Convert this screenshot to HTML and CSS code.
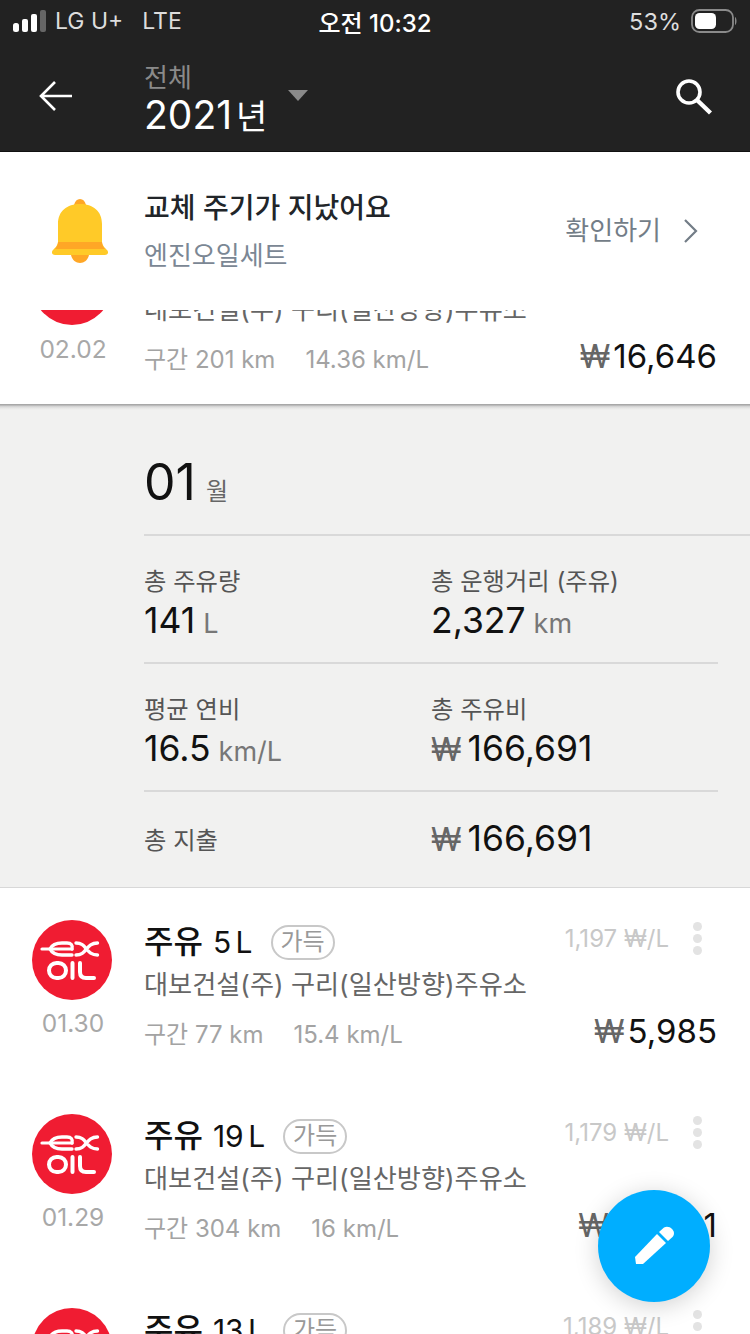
FILE: index.html
```html
<!DOCTYPE html>
<html lang="ko">
<head>
  <meta charset="UTF-8">
  <meta name="viewport" content="width=device-width, initial-scale=1.0">
  <title>주유 기록</title>
  <link rel="stylesheet" href="styles.css">
</head>
<body>
  <svg class="defs" width="0" height="0">
    <symbol id="ex-oil" viewBox="0 0 80 80">
      <circle cx="40" cy="40" r="40" fill="#f01c32"/>
      <g fill="none" stroke="#fff" stroke-linecap="round">
        <path stroke-width="3.2" d="M10 29H40"/>
        <path stroke-width="3.4" d="M18 29c2-4 6-6 12-6h5c4 0 6 2 5 6M18 29c2 4 6 6 12 6h10"/>
        <path stroke-width="3.4" d="M44 23c6 0 8 3 10.500 6s5 6 11 6M65.500 23c-6 0-8.500 3-11 6s-4.500 6-10.500 6"/>
        <rect x="17" y="43" width="17" height="15" rx="7.500" stroke-width="4"/>
        <path stroke-width="4" d="M40.500 43v15M48 43v9c0 4 2 6 6 6h8"/>
      </g>
    </symbol>
  </svg>

  <header class="top">
    <div class="status">
      <div class="status-left">
        <svg width="34" height="22" viewBox="0 0 34 22">
          <rect x="0" y="13" width="6" height="9" rx="2.500" fill="#fff"/>
          <rect x="9" y="9" width="6" height="13" rx="2" fill="#fff"/>
          <rect x="18" y="4" width="6" height="18" rx="2" fill="#fff"/>
          <rect x="27" y="0" width="6" height="22" rx="2" fill="#666"/>
        </svg>
        <span class="carrier">LG U+</span>
        <span class="carrier">LTE</span>
      </div>
      <div class="clock">오전 10:32</div>
      <div class="status-right">
        <span>53%</span>
        <svg width="46" height="24" viewBox="0 0 46 24">
          <rect x="1" y="1" width="41" height="22" rx="7.500" fill="none" stroke="#8a8a8a" stroke-width="1.800"/>
          <rect x="4" y="4" width="21" height="16" rx="4.500" fill="#fff"/>
          <path d="M44 8c2 1 2 7 0 8z" fill="#8a8a8a"/>
        </svg>
      </div>
    </div>
    <div class="appbar">
      <svg class="back" width="34" height="32" viewBox="0 0 34 32">
        <path d="M16 2 2 16l14 14M2 16h31" fill="none" stroke="#fff" stroke-width="2.600"/>
      </svg>
      <div class="period">
        <div class="period-label">전체</div>
        <div class="period-year">2021<span class="year-unit">년</span></div>
      </div>
      <div class="caret"></div>
      <svg class="search" width="38" height="38" viewBox="0 0 38 38">
        <circle cx="14" cy="14" r="11" fill="none" stroke="#fff" stroke-width="3.600"/>
        <path d="m22 22 13.500 13" fill="none" stroke="#fff" stroke-width="4.400"/>
      </svg>
    </div>
  </header>

  <section class="notice">
    <svg class="bell" width="58" height="66" viewBox="0 0 58 66">
      <path d="M23 7c1-4 3-6 6-6s5 2 6 6z" fill="#ffa726"/>
      <path d="M20 57h18c-1 5-5 8-9 8s-8-3-9-8z" fill="#ffa726"/>
      <path d="M7 44V26C7 13 16 6 29 6s22 7 22 20v18c0 3 3 6 5 8 2 2 1 5-2 5H4c-3 0-4-3-2-5 2-2 5-5 5-8z" fill="#ffca28"/>
      <path d="M7 44h44c0 3 1.500 5 3 7H4c1.500-2 3-4 3-7z" fill="#ffa726"/>
    </svg>
    <div class="notice-text">
      <div class="notice-title">교체 주기가 지났어요</div>
      <div class="notice-sub">엔진오일세트</div>
    </div>
    <div class="notice-action">
      <span>확인하기</span>
      <svg width="16" height="26" viewBox="0 0 16 26">
        <path d="m2 2 11 11L2 24" fill="none" stroke="#737d87" stroke-width="2.200"/>
      </svg>
    </div>
  </section>

  <div class="cut-row">
    <article class="row row-scrolled">
      <div class="row-side">
        <svg class="brand" width="80" height="80"><use href="#ex-oil"/></svg>
        <div class="row-date">02.02</div>
      </div>
      <div class="row-body">
        <div class="row-head"></div>
        <div class="row-place">대보건설(주) 구리(일산방향)주유소</div>
        <div class="row-foot">
          <div class="row-stats"><span>구간 201 km</span><span>14.36 km/L</span></div>
          <div class="row-price"><span class="won">₩</span>16,646</div>
        </div>
      </div>
    </article>
  </div>

  <section class="month">
    <div class="month-title"><span class="month-num">01</span><span class="month-unit">월</span></div>
    <div class="month-grid first">
      <div><div class="m-label">총 주유량</div><div class="m-value">141<small>L</small></div></div>
      <div><div class="m-label">총 운행거리 (주유)</div><div class="m-value">2,327<small>km</small></div></div>
    </div>
    <div class="month-grid">
      <div><div class="m-label">평균 연비</div><div class="m-value">16.5<small>km/L</small></div></div>
      <div><div class="m-label">총 주유비</div><div class="m-value"><span class="won">₩</span>166,691</div></div>
    </div>
    <div class="month-grid total">
      <div class="m-label">총 지출</div>
      <div class="m-value"><span class="won">₩</span>166,691</div>
    </div>
  </section>

  <article class="row">
    <div class="row-side">
      <svg class="brand" width="80" height="80"><use href="#ex-oil"/></svg>
      <div class="row-date">01.30</div>
    </div>
    <div class="row-body">
      <div class="row-head">
        <div class="row-title"><strong>주유</strong><span class="fuel">5 L</span><span class="tag">가득</span></div>
        <div class="row-unit">1,197 ₩/L</div>
        <div class="kebab"><i></i><i></i><i></i></div>
      </div>
      <div class="row-place">대보건설(주) 구리(일산방향)주유소</div>
      <div class="row-foot">
        <div class="row-stats"><span>구간 77 km</span><span>15.4 km/L</span></div>
        <div class="row-price"><span class="won">₩</span>5,985</div>
      </div>
    </div>
  </article>

  <article class="row">
    <div class="row-side">
      <svg class="brand" width="80" height="80"><use href="#ex-oil"/></svg>
      <div class="row-date">01.29</div>
    </div>
    <div class="row-body">
      <div class="row-head">
        <div class="row-title"><strong>주유</strong><span class="fuel">19 L</span><span class="tag">가득</span></div>
        <div class="row-unit">1,179 ₩/L</div>
        <div class="kebab"><i></i><i></i><i></i></div>
      </div>
      <div class="row-place">대보건설(주) 구리(일산방향)주유소</div>
      <div class="row-foot">
        <div class="row-stats"><span>구간 304 km</span><span>16 km/L</span></div>
        <div class="row-price"><span class="won">₩</span>22,401</div>
      </div>
    </div>
  </article>

  <article class="row">
    <div class="row-side">
      <svg class="brand" width="80" height="80"><use href="#ex-oil"/></svg>
    </div>
    <div class="row-body">
      <div class="row-head">
        <div class="row-title"><strong>주유</strong><span class="fuel">13 L</span><span class="tag">가득</span></div>
        <div class="row-unit">1,189 ₩/L</div>
        <div class="kebab"><i></i><i></i><i></i></div>
      </div>
    </div>
  </article>

  <button class="fab" aria-label="기록 추가">
    <svg width="64" height="64" viewBox="0 0 64 64">
      <path d="M13 43 35 20l9 9-23 21h-7z" fill="#fff"/>
      <path d="m37 18 5-4.500c3-1.500 6-.5 8 1.500s3 5 .5 8L46 27z" fill="#fff"/>
    </svg>
  </button>
</body>
</html>
```

FILE: styles.css
```css
* {
  box-sizing: border-box;
}
html, body {
  margin: 0;
  height: 1334px;
  overflow: hidden;
}
body {
  position: relative;
  width: 750px;
  background-color: #fff;
  font-family: Inter, "Noto Sans CJK KR", "Liberation Sans", sans-serif;
  color: #111;
}
.defs {
  display: block;
  height: 0;
}

/* dark header */
.top {
  height: 152px;
  background-color: #222;
  border-bottom: 1px solid #111;
  color: #fff;
}
.status {
  height: 40px;
  padding: 2px 13px 0;
  display: grid;
  grid-template-columns: 1fr auto 1fr;
  align-items: center;
  font-size: 23.500px;
}
.status-left {
  display: flex;
  align-items: center;
  gap: 8px;
}
.carrier {
  color: #ddd;
  margin-right: 11px;
  font-size: 23px;
}
.clock {
  font-size: 24px;
  font-weight: 500;
}
.status-right {
  display: flex;
  justify-content: flex-end;
  align-items: center;
  gap: 10px;
  color: #ddd;
}
.appbar {
  height: 111px;
  display: flex;
  align-items: center;
  padding: 0 37px 0 39px;
}
.back {
  margin-right: 71px;
}
.period {
  margin-top: 8px;
}
.period-label {
  font-size: 26px;
  line-height: 36px;
  color: #8a8a8a;
}
.period-year {
  margin-top: -4px;
  font-size: 39px;
  line-height: 46px;
}
.year-unit {
  font-size: 34px;
  margin-left: 4px;
}
.caret {
  width: 0;
  height: 0;
  margin: 0 auto 0 21px;
  border-left: 10px solid transparent;
  border-right: 10px solid transparent;
  border-top: 11px solid #8a8a8a;
}
.search {
  margin-top: 2px;
}

/* notice */
.notice {
  height: 158px;
  display: flex;
  align-items: flex-start;
  padding: 46px 51px 0 51px;
  background-color: #fff;
}
.bell {
  flex: none;
  margin-right: 35px;
}
.notice-text {
  flex: 1;
  margin-top: -6px;
}
.notice-title {
  font-size: 28px;
  font-weight: 500;
  line-height: 32px;
  color: #212529;
}
.notice-sub {
  font-size: 26px;
  line-height: 36px;
  margin-top: 14px;
  color: #7b8794;
}
.notice-action {
  display: flex;
  align-items: center;
  gap: 22px;
  font-size: 26px;
  line-height: 36px;
  margin-top: 15px;
  color: #737d87;
}

/* rows */
.cut-row {
  height: 94px;
  overflow: hidden;
  background-color: #fff;
}
.row {
  height: 194px;
  display: flex;
  background-color: #fff;
}
.row-scrolled {
  margin-top: -97px;
}
.row-side {
  flex: none;
  width: 80px;
  margin: 32px 32px 0;
  text-align: center;
}
.brand {
  display: block;
}
.row-date {
  margin-top: 9px;
  margin-left: 2px;
  font-size: 24.500px;
  line-height: 28px;
  color: #a8a8a8;
}
.row-scrolled .row-date {
  margin-top: 10px;
}
.row-body {
  flex: 1;
  padding: 34px 33px 0 0;
}
.row-head {
  display: flex;
  align-items: center;
  height: 40px;
}
.row-title {
  flex: 1;
  display: flex;
  align-items: center;
  font-size: 30px;
  line-height: 40px;
}
.row-title strong {
  font-size: 32px;
  font-weight: 500;
}
.fuel {
  margin-left: 10px;
  word-spacing: -4px;
}
.tag {
  height: 35px;
  margin-left: 18px;
  padding: 0 8px;
  border: 2px solid #c8c8c8;
  border-radius: 18px;
  font-size: 24px;
  line-height: 30px;
  color: #999;
}
.row-unit {
  font-size: 24px;
  color: #c8c8c8;
  margin-top: -8px;
}
.kebab {
  width: 9px;
  margin: -8px 15px 0 24px;
  display: flex;
  flex-direction: column;
  gap: 3px;
}
.kebab i {
  width: 9px;
  height: 9px;
  border-radius: 50%;
  background-color: #e3e3e3;
}
.row-place {
  font-size: 26.200px;
  line-height: 36px;
  margin-top: 5px;
  color: #666;
  white-space: nowrap;
}
.row-foot {
  display: flex;
  justify-content: space-between;
  align-items: center;
  margin-top: 10px;
}
.row-stats {
  display: flex;
  align-items: baseline;
  gap: 30px;
  font-size: 24px;
  color: #a3a3a3;
}
.row-price {
  font-size: 33px;
  line-height: 40px;
  margin-top: -2px;
  color: #111;
}
.won {
  color: #666;
  margin-right: 3px;
  font-size: 0.97em;
}

/* month summary */
.month {
  height: 484px;
  padding-left: 144px;
  background: linear-gradient(#a8a8a8 0, #a8a8a8 1px, #cfcfcf 2px, #e6e6e5 4px, #f1f1f0 6px);
  border-bottom: 1px solid #d8d8d8;
}
.month-title {
  height: 130px;
  display: flex;
  align-items: baseline;
  padding-top: 43px;
}
.month-num {
  font-size: 50px;
  line-height: 70px;
}
.month-unit {
  margin-left: 10px;
  font-size: 24px;
  color: #666;
}
.month-grid {
  height: 128px;
  margin-right: 32px;
  padding-top: 28px;
  display: grid;
  grid-template-columns: 287px 1fr;
  border-top: 2px solid #d9d9d9;
}
.month-grid.first {
  margin-right: 0;
}
.month-grid.total {
  height: 97px;
  align-items: center;
  padding-top: 0;
}
.m-label {
  font-size: 24.300px;
  line-height: 34px;
  color: #555;
}
.m-value {
  font-size: 35.500px;
  line-height: 46px;
  color: #111;
}
.m-value small {
  margin-left: 8px;
  font-size: 27px;
  color: #777;
}
.m-value .won {
  font-size: 0.9em;
  margin-right: 6px;
}

/* floating button */
.fab {
  position: absolute;
  left: 598px;
  top: 1190px;
  width: 112px;
  height: 112px;
  padding: 0;
  border: none;
  border-radius: 50%;
  background-color: #00aeff;
  box-shadow: 0 4px 24px rgba(0, 0, 0, 0.18);
  display: flex;
  align-items: center;
  justify-content: center;
}
```
